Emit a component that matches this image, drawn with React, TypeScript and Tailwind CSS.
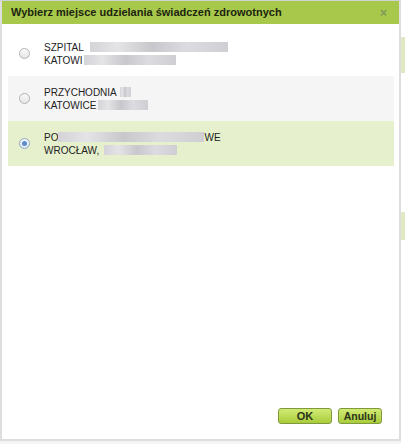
const places = [
  {
    id: "a",
    line1: "SZPITAL",
    blur1: { gap: 6, w: 138 },
    tail1: "",
    line2: "KATOWI",
    blur2: { gap: 1, w: 92 },
    bg: "bg-white",
    checked: false,
  },
  {
    id: "b",
    line1: "PRZYCHODNIA",
    blur1: { gap: 3, w: 11 },
    tail1: "",
    line2: "KATOWICE",
    blur2: { gap: 2, w: 50 },
    bg: "bg-[#f5f5f5]",
    checked: false,
  },
  {
    id: "c",
    line1: "PO",
    blur1: { gap: 0, w: 146 },
    tail1: "WE",
    line2: "WROCŁAW,",
    blur2: { gap: 5, w: 73 },
    bg: "bg-[#e6f0cd]",
    checked: true,
  },
];

function Blur({ gap, w }: { gap: number; w: number }) {
  return (
    <span
      className="inline-block h-[10px] align-middle bg-[linear-gradient(90deg,#d4d4d8,#e4e4e7_20%,#c8c8cc_45%,#dcdce0_70%,#cfcfd3)] blur-[0.6px]"
      style={{ width: w, marginLeft: gap }}
    />
  );
}

function Radio({ checked }: { checked: boolean }) {
  return (
    <span
      className={
        "flex h-[11px] w-[11px] items-center justify-center rounded-full border " +
        (checked
          ? "border-[#8fa9c9] bg-[linear-gradient(#f3f6fa,#dfe7f0)]"
          : "border-[#b3b3b3] bg-[linear-gradient(#fafafa,#e6e6e6)]")
      }
    >
      {checked && <span className="h-[5px] w-[5px] rounded-full bg-[#5d8ccc]" />}
    </span>
  );
}

export default function App() {
  return (
    <div className="flex h-[444px] w-[405px] bg-white font-['Liberation_Sans',Arial,sans-serif]">
      <div className="flex w-[401px] flex-col">
        <div className="h-px bg-[#cfd3d6]" />
        <div className="flex flex-1 flex-col border-x-2 border-b-2 border-[#dedede] bg-white">
          <div className="flex h-[23px] items-center justify-between bg-[#a7c84a] pl-[9px] pr-[12px]">
            <span className="text-[11px] font-bold text-[#1c2410]">
              Wybierz miejsce udzielania świadczeń zdrowotnych
            </span>
            <span className="text-[12px] font-bold leading-none text-[#7d9a5a]">×</span>
          </div>

          <div className="flex flex-col pl-[6px] pr-[5px] pt-[7px]">
            {places.map((p) => (
              <div key={p.id} className={"flex h-[45px] items-center " + p.bg}>
                <div className="flex w-[32px] justify-center">
                  <Radio checked={p.checked} />
                </div>
                <div className="ml-[4px] flex flex-col text-[10px] leading-[13px] text-[#222]">
                  <div className="flex items-center">
                    <span>{p.line1}</span>
                    <Blur {...p.blur1} />
                    {p.tail1 && <span>{p.tail1}</span>}
                  </div>
                  <div className="flex items-center">
                    <span>{p.line2}</span>
                    <Blur {...p.blur2} />
                  </div>
                </div>
              </div>
            ))}
          </div>

          <div className="mt-auto flex justify-end gap-[6px] pb-[15px] pr-[17px]">
            <button className="h-[16px] w-[54px] rounded-[3px] border border-[#7f9a3c] bg-[linear-gradient(#d2ea74,#a9cc3c)] text-[11px] font-bold leading-none text-[#2b3318]">
              OK
            </button>
            <button className="h-[16px] w-[44px] rounded-[3px] border border-[#7f9a3c] bg-[linear-gradient(#d2ea74,#a9cc3c)] text-[10.5px] font-bold leading-none text-[#2b3318]">
              Anuluj
            </button>
          </div>
        </div>
        <div className="h-[3px] bg-[#f4f4f4]" />
      </div>

      <div className="flex w-[4px] flex-col bg-white">
        <div className="h-[37px]" />
        <div className="h-[36px] bg-[#dfe9c4]" />
        <div className="h-[139px]" />
        <div className="h-[28px] bg-[#dfe9c4]" />
      </div>
    </div>
  );
}
